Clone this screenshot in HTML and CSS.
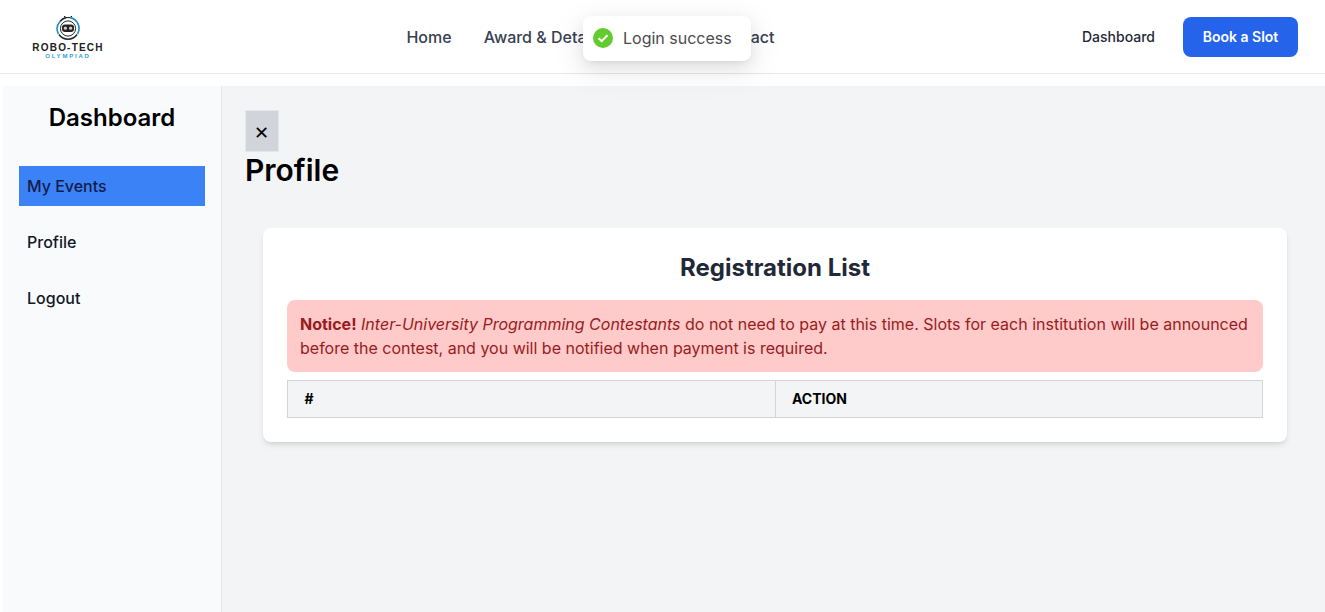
FILE: index.html
```html
<!DOCTYPE html>
<html lang="en">
<head>
<meta charset="utf-8">
<title>Profile</title>
<link rel="stylesheet" href="styles.css">
</head>
<body>
<header class="topbar">
  <a class="logo" href="#">
    <svg class="logo-mark" width="26" height="25" viewBox="0 0 26 25" aria-hidden="true">
      <path d="M9 1.2 L11 2.6 H15 L17 1.2" fill="none" stroke="#111" stroke-width="1"/>
      <path d="M5 6.5 A11 11 0 0 1 11 2.6" fill="none" stroke="#1f2937" stroke-width="1.6"/>
      <path d="M15 2.6 A11 11 0 0 1 22.5 19" fill="none" stroke="#1f8fc4" stroke-width="1.6"/>
      <path d="M22 19.5 A11 11 0 0 1 4 19.5" fill="none" stroke="#1f2937" stroke-width="1.6"/>
      <path d="M3.5 19 A11 11 0 0 1 5 6.5" fill="none" stroke="#1f8fc4" stroke-width="1.6"/>
      <circle cx="13" cy="13.5" r="7.6" fill="#fff" stroke="#222" stroke-width="1"/>
      <rect x="7" y="9.5" width="12" height="7.5" rx="3" fill="#222"/>
      <circle cx="10.4" cy="13.2" r="1.6" fill="#ccc"/>
      <circle cx="15.6" cy="13.2" r="1.6" fill="#ccc"/>
    </svg>
    <span class="logo-name">ROBO-TECH</span>
    <span class="logo-sub">OLYMPIAD</span>
  </a>
  <nav class="nav">
    <a href="#">Home</a>
    <a href="#">Award &amp; Details</a>
    <span class="nav-slot" aria-hidden="true"></span>
    <a href="#">Contact</a>
  </nav>
  <div class="actions">
    <a class="dash-link" href="#">Dashboard</a>
    <a class="book-btn" href="#">Book a Slot</a>
  </div>
</header>

<div class="toast">
  <svg width="20" height="20" viewBox="0 0 20 20" aria-hidden="true">
    <circle cx="10" cy="10" r="10" fill="#52c41a" opacity=".9"/>
    <path d="M5.6 10.3 L8.7 13.2 L14.4 7.3" fill="none" stroke="#fff" stroke-width="2"/>
  </svg>
  <span>Login success</span>
</div>

<div class="shell">
  <aside class="sidebar">
    <h2 class="side-title">Dashboard</h2>
    <ul class="side-menu">
      <li class="active"><a href="#">My Events</a></li>
      <li><a href="#">Profile</a></li>
      <li><a href="#">Logout</a></li>
    </ul>
  </aside>
  <main class="main">
    <button class="close-btn" type="button">✕</button>
    <h1 class="page-title">Profile</h1>
    <section class="card">
      <h2 class="card-title">Registration List</h2>
      <p class="notice"><strong>Notice!</strong> <em>Inter-University Programming Contestants</em> do not need to pay at this time. Slots for each institution will be announced before the contest, and you will be notified when payment is required.</p>
      <table class="reg-table">
        <thead>
          <tr><th>#</th><th>ACTION</th></tr>
        </thead>
      </table>
    </section>
  </main>
</div>
</body>
</html>
```
FILE: styles.css
```css
* { box-sizing: border-box; }
html, body { margin: 0; padding: 0; height: 100%; overflow: hidden; }
body { font-family: Inter, "Liberation Sans", sans-serif; background: #fff; color: #000; }
a { text-decoration: none; color: inherit; }

.topbar {
  height: 74px;
  border-bottom: 1px solid #e5e7eb;
  display: flex;
  justify-content: space-between;
  align-items: center;
  padding: 0 27px 0 32px;
  background: #fff;
}
.logo {
  width: 72px;
  display: flex;
  flex-direction: column;
  align-items: center;
  line-height: 1;
  margin-top: 2px;
}
.logo-mark { display: block; margin-bottom: 4px; }
.logo-name { font-family: "Liberation Sans", sans-serif; font-size: 10px; font-weight: 700; color: #222; letter-spacing: 1.2px; white-space: nowrap; line-height: 8px; }
.logo-sub { font-family: "Liberation Sans", sans-serif; font-size: 6px; font-weight: 700; color: #2b9fd9; letter-spacing: 1.8px; line-height: 8px; }

.nav { display: flex; gap: 32px; margin-right: 5px; font-size: 16px; font-weight: 500; color: #374151; line-height: 24px; }
.nav-slot { width: 47px; }
.actions { display: flex; justify-content: flex-end; align-items: center; gap: 28px; }
.dash-link { font-size: 14px; font-weight: 500; color: #1f2937; }
.book-btn {
  width: 115px; height: 40px;
  display: flex; align-items: center; justify-content: center;
  background: #2563eb; color: #fff;
  border-radius: 8px;
  font-size: 14px; font-weight: 600;
}

.toast {
  position: absolute; left: 583px; top: 16px;
  width: 168px; height: 45px;
  display: flex; align-items: center; gap: 10px;
  padding: 0 10px 1px;
  background: #fff;
  border-radius: 8px;
  box-shadow: 0 6px 16px rgba(0,0,0,.08), 0 3px 6px -4px rgba(0,0,0,.12), 0 9px 28px 8px rgba(0,0,0,.05);
  font-size: 16px; color: #4b4b4f;
}

.shell { display: flex; margin-top: 12px; padding-left: 3px; height: 526px; }
.sidebar {
  width: 219px; flex: none;
  background: #f9fafb;
  border-right: 1px solid #e5e7eb;
  padding: 16px;
}
.side-title { margin: 0; font-size: 24px; line-height: 32px; font-weight: 600; text-align: center; }
.side-menu { list-style: none; margin: 32px 0 0; padding: 0; display: flex; flex-direction: column; gap: 16px; }
.side-menu li { height: 40px; display: flex; align-items: center; padding-left: 8px; font-size: 16px; font-weight: 500; color: #111827; }
.side-menu .active { background: #3b82f6; color: #111c4e; }

.main { flex: 1; background: #f3f4f6; padding: 24px 38px 0 23px; }
.close-btn {
  display: block;
  width: 34px; height: 42px; padding: 2px 2px 0 0;
  background: #d1d5db; border: 1px solid #e5e7eb;
  font-family: Inter, sans-serif; font-size: 18px; color: #000;
}
.page-title { margin: 0; font-size: 30px; line-height: 36px; font-weight: 600; }
.card {
  margin: 40px 0 0 18px;
  padding: 24px;
  background: #fff;
  border-radius: 8px;
  box-shadow: 0 4px 6px -1px rgba(0,0,0,.1), 0 2px 4px -2px rgba(0,0,0,.1);
}
.card-title { margin: 0 0 16px; font-size: 24px; line-height: 32px; font-weight: 700; text-align: center; color: #1f2937; }
.notice {
  margin: 0 0 8px;
  padding: 12px 13px;
  background: #fecaca;
  border-radius: 8px;
  color: #991b1b;
  font-size: 16px; line-height: 24px;
}
.reg-table { width: 100%; border-collapse: collapse; table-layout: fixed; background: #f3f4f6; }
.reg-table th { border: 1px solid #d1d5db; padding: 8px 16px 8px 16.5px; font-size: 14px; line-height: 20px; font-weight: 700; text-align: left; }
```
